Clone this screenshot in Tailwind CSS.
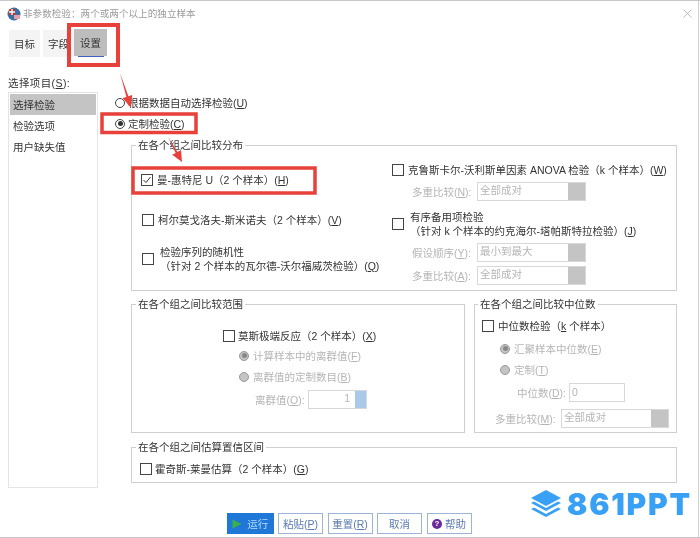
<!DOCTYPE html>
<html lang="en">
<head>
  <meta charset="UTF-8">
  <title>非参数检验</title>
  <script src="https://cdn.jsdelivr.net/npm/@tailwindcss/browser@4"></script>
</head>
<body class="bg-white">
<div class="relative w-[700px] h-[538px] overflow-hidden bg-white border-t border-t-[#c8c8c8] text-[10.5px] leading-[14px] text-[#333] blur-[0.3px] font-['Liberation_Sans','Noto_Sans_CJK_SC',sans-serif]">

  <!-- title bar -->
  <div class="flex items-center h-[25px] pl-[7px] pr-[8px]">
    <svg width="14" height="14" viewBox="0 0 14 14">
      <circle cx="7" cy="7" r="6.5" fill="#3b6ea5"/>
      <rect x="2" y="2" width="6" height="6" fill="#c0392b"/>
      <path d="M2 5h6M5 2v6" stroke="#fff" stroke-width="1.4"/>
      <rect x="7" y="8" width="6" height="4" fill="#e8a0a8"/>
    </svg>
    <span class="ml-[2px] text-[9.6px] text-[#9a9a9a]">非参数检验：两个或两个以上的独立样本</span>
    <svg class="ml-auto" width="9" height="9" viewBox="0 0 9 9"><path d="M0.5 0.5l8 8M8.5 0.5l-8 8" stroke="#aaa" stroke-width="0.8"/></svg>
  </div>

  <!-- tabs -->
  <div class="flex h-[32px] pl-[9px]">
    <div class="flex items-center justify-center w-[31px] h-[27px] mt-[4px] bg-[#f4f4f4]">目标</div>
    <div class="flex items-center justify-center w-[31px] h-[27px] mt-[4px] ml-[3px] bg-[#f4f4f4]">字段</div>
    <div class="relative flex items-center justify-center w-[33px] h-[27px] mt-[3px] bg-[#bdbdbd]">
      设置
      <span class="absolute left-[4px] right-[3px] bottom-[-1px] h-[1.5px] bg-[#3f5fc0]"></span>
    </div>
  </div>

  <!-- body -->
  <div class="flex pl-[8px] pr-[23px] mt-[18px]">
    <div class="w-[90px] shrink-0">
      <div class="h-[16px] tracking-[0.4px]">选择项目(<u>S</u>):</div>
      <div class="h-[396px] border border-[#e4e4e4] p-px">
        <div class="flex items-center h-[21px] px-[3px] bg-[#c4c4c4]">选择检验</div>
        <div class="flex items-center h-[21px] px-[3px]">检验选项</div>
        <div class="flex items-center h-[21px] px-[3px]">用户缺失值</div>
      </div>
    </div>

    <div class="flex-1 ml-[15px] pt-[16px]">
      <label class="flex items-center gap-[3px] h-[21px] pl-[2px]">
        <span class="w-[10px] h-[10px] rounded-full border border-[#444] bg-white"></span>
        <span>根据数据自动选择检验(<u>U</u>)</span>
      </label>
      <label class="flex items-center gap-[3px] h-[21px] pl-[2px]">
        <span class="flex items-center justify-center w-[10px] h-[10px] rounded-full border border-[#444]"><span class="w-[5px] h-[5px] rounded-full bg-[#333]"></span></span>
        <span>定制检验(<u>C</u>)</span>
      </label>

      <!-- compare distributions -->
      <fieldset class="h-[153px] mt-[4px] ml-[18px] border border-[#cfcfcf]">
        <legend class="ml-[4px] px-[2px]">在各个组之间比较分布</legend>
        <div class="flex w-full">
          <div class="w-[250px] pl-[9px] shrink-0">
            <label class="flex items-center gap-[4px] h-[24px] mt-[16px]">
              <span class="w-[12px] h-[12px] border border-[#444] flex items-center justify-center"><svg width="10" height="10" viewBox="0 0 10 10"><path d="M1.5 5l2.5 2.5 4.5-5.5" fill="none" stroke="#333" stroke-width="1"/></svg></span>
              <span>曼-惠特尼 U（2 个样本）(<u>H</u>)</span>
            </label>
            <label class="flex items-center gap-[4px] h-[24px] mt-[16px] pl-[1px]">
              <span class="w-[12px] h-[12px] border border-[#444]"></span>
              <span>柯尔莫戈洛夫-斯米诺夫（2 个样本）(<u>V</u>)</span>
            </label>
            <label class="flex items-center gap-[6px] mt-[13px] pl-[1px]">
              <span class="w-[12px] h-[12px] border border-[#444]"></span>
              <span>检验序列的随机性<br>（针对 2 个样本的瓦尔德-沃尔福威茨检验）(<u>Q</u>)</span>
            </label>
          </div>
          <div class="pl-[10px]">
            <label class="flex items-center gap-[4px] h-[16px] mt-[10px]">
              <span class="w-[12px] h-[12px] border border-[#444]"></span>
              <span>克鲁斯卡尔-沃利斯单因素 ANOVA 检验（k 个样本）(<u>W</u>)</span>
            </label>
            <div class="flex items-center h-[19px] mt-[4px] pl-[20px] text-[#b5b5b5]">
              <span class="w-[65px]">多重比较(<u>N</u>):</span>
              <div class="flex w-[109px] h-[19px] border border-[#d8d8d8]"><span class="flex-1 pl-[2px]">全部成对</span><span class="w-[17px] bg-[#c4c4c4]"></span></div>
            </div>
            <label class="flex items-center gap-[6px] mt-[9px]">
              <span class="w-[12px] h-[12px] border border-[#444]"></span>
              <span>有序备用项检验<br>（针对 k 个样本的约克海尔-塔帕斯特拉检验）(<u>J</u>)</span>
            </label>
            <div class="flex items-center h-[19px] mt-[5px] pl-[20px] text-[#b5b5b5]">
              <span class="w-[65px]">假设顺序(<u>Y</u>):</span>
              <div class="flex w-[109px] h-[19px] border border-[#d8d8d8]"><span class="flex-1 pl-[2px]">最小到最大</span><span class="w-[17px] bg-[#c4c4c4]"></span></div>
            </div>
            <div class="flex items-center h-[19px] mt-[4px] pl-[20px] text-[#b5b5b5]">
              <span class="w-[65px]">多重比较(<u>A</u>):</span>
              <div class="flex w-[109px] h-[19px] border border-[#d8d8d8]"><span class="flex-1 pl-[2px]">全部成对</span><span class="w-[17px] bg-[#c4c4c4]"></span></div>
            </div>
          </div>
        </div>
      </fieldset>

      <!-- range / median -->
      <div class="flex gap-[9px] mt-[6px] ml-[18px]">
        <fieldset class="w-[334px] h-[136px] border border-[#cfcfcf]">
          <legend class="ml-[4px] px-[2px]">在各个组之间比较范围</legend>
          <div class="pl-[91px] pt-[17px]">
            <label class="flex items-center gap-[3px] h-[16px]">
              <span class="w-[12px] h-[12px] border border-[#444]"></span>
              <span>莫斯极端反应（2 个样本）(<u>X</u>)</span>
            </label>
            <div class="flex items-center gap-[4px] h-[21px] mt-[1px] pl-[16px] text-[#b5b5b5]">
              <span class="flex items-center justify-center w-[10px] h-[10px] rounded-full bg-[#c4c4c4] border border-[#999]"><span class="w-[5px] h-[5px] rounded-full bg-[#888]"></span></span>
              <span>计算样本中的离群值(<u>F</u>)</span>
            </div>
            <div class="flex items-center gap-[4px] h-[21px] pl-[16px] text-[#b5b5b5]">
              <span class="w-[10px] h-[10px] rounded-full bg-[#c4c4c4] border border-[#999]"></span>
              <span>离群值的定制数目(<u>B</u>)</span>
            </div>
            <div class="flex items-center h-[19px] mt-[3px] pl-[32px] text-[#b5b5b5]">
              <span class="w-[53px]">离群值(<u>O</u>):</span>
              <div class="flex w-[59px] h-[19px] border border-[#d8d8d8]"><span class="flex-1 text-right pr-[5px]">1</span><span class="w-[11px] bg-[#a9c8ea]"></span></div>
            </div>
          </div>
        </fieldset>
        <fieldset class="w-[203px] h-[136px] border border-[#cfcfcf]">
          <legend class="ml-[3px] px-[2px]">在各个组之间比较中位数</legend>
          <div class="pl-[7px] pt-[7px]">
            <label class="flex items-center gap-[4px] h-[16px]">
              <span class="w-[12px] h-[12px] border border-[#444]"></span>
              <span>中位数检验（<u>k</u> 个样本）</span>
            </label>
            <div class="flex items-center gap-[4px] h-[21px] mt-[4px] pl-[18px] text-[#b5b5b5]">
              <span class="flex items-center justify-center w-[10px] h-[10px] rounded-full bg-[#c4c4c4] border border-[#999]"><span class="w-[5px] h-[5px] rounded-full bg-[#888]"></span></span>
              <span>汇聚样本中位数(<u>E</u>)</span>
            </div>
            <div class="flex items-center gap-[4px] h-[21px] pl-[18px] text-[#b5b5b5]">
              <span class="w-[10px] h-[10px] rounded-full bg-[#c4c4c4] border border-[#999]"></span>
              <span>定制(<u>T</u>)</span>
            </div>
            <div class="flex items-center h-[19px] mt-[3px] pl-[35px] text-[#b5b5b5]">
              <span class="w-[52px]">中位数(<u>D</u>):</span>
              <div class="w-[56px] h-[19px] border border-[#d8d8d8] pl-[2px] leading-[17px]">0</div>
            </div>
            <div class="flex items-center h-[19px] mt-[7px] pl-[13px] text-[#b5b5b5]">
              <span class="w-[66px]">多重比较(<u>M</u>):</span>
              <div class="flex w-[108px] h-[19px] border border-[#d8d8d8]"><span class="flex-1 pl-[2px]">全部成对</span><span class="w-[17px] bg-[#c4c4c4]"></span></div>
            </div>
          </div>
        </fieldset>
      </div>

      <!-- confidence interval -->
      <fieldset class="h-[43px] mt-[7px] ml-[18px] border border-[#cfcfcf]">
        <legend class="ml-[4px] px-[2px]">在各个组之间估算置信区间</legend>
        <label class="flex items-center gap-[3px] h-[16px] pl-[8px] mt-[7px]">
          <span class="w-[12px] h-[12px] border border-[#444]"></span>
          <span>霍奇斯-莱曼估算（2 个样本）(<u>G</u>)</span>
        </label>
      </fieldset>
    </div>
  </div>

  <!-- footer buttons -->
  <div class="flex gap-[4.5px] mt-[25px] pl-[227px]">
    <button class="flex items-center justify-center gap-[5px] w-[46.5px] h-[21px] bg-[#1f78d8] text-[#b8dcff]">
      <svg width="10" height="10" viewBox="0 0 10 10"><path d="M0.5 0.5L9.5 5L0.5 9.5Z" fill="#3cb04a"/></svg>运行
    </button>
    <button class="w-[45px] h-[21px] border border-[#9db4d8] text-[#5a7ab0]">粘贴(<u>P</u>)</button>
    <button class="w-[45px] h-[21px] border border-[#9db4d8] text-[#5a7ab0]">重置(<u>R</u>)</button>
    <button class="w-[45px] h-[21px] border border-[#9db4d8] text-[#5a7ab0]">取消</button>
    <button class="flex items-center justify-center gap-[3px] w-[45px] h-[21px] border border-[#9db4d8] text-[#5a7ab0]">
      <span class="flex items-center justify-center w-[10px] h-[10px] rounded-full bg-[#6a2a9a] text-white text-[8px] font-bold">?</span>帮助
    </button>
  </div>

  <!-- window edge -->
  <div class="absolute top-0 bottom-0 right-[1px] w-px bg-[#d0d0d0]"></div>
  <div class="absolute left-0 right-0 bottom-0 h-px bg-[#c8c8c8]"></div>

  <!-- watermark -->
  <div class="absolute left-[530px] top-[488px] flex items-center gap-[5px] text-[#38a0f5]">
    <svg width="32" height="30" viewBox="0 0 32 30">
      <path d="M16 1L31 9L16 17L1 9Z" fill="#38a0f5"/>
      <path d="M1 14L4 12.5L16 19L28 12.5L31 14L16 22Z" fill="#38a0f5"/>
      <path d="M1 20L4 18.5L16 25L28 18.5L31 20L16 28Z" fill="#38a0f5"/>
    </svg>
    <span class="text-[30px] leading-[30px] font-black tracking-[1.8px] font-['Inter',sans-serif]">861PPT</span>
  </div>

  <!-- red annotations -->
  <svg class="absolute left-0 top-[-1px] pointer-events-none" width="700" height="538" viewBox="0 0 700 538">
    <g fill="none" stroke="#e8403a">
      <rect x="69" y="25" width="49" height="40" stroke-width="4"/>
      <rect x="102" y="114" width="94" height="18.5" stroke-width="3.5"/>
      <rect x="133" y="168" width="182" height="25" stroke-width="3.5"/>
    </g>
    <path d="M120 73L128.4 96.3L132.2 95.1L131 108L122.6 98.1L126.4 96.9Z" fill="#e8403a"/>
    <path d="M168 137L177.5 151.9L181 150L182 162L172.2 154.8L175.7 152.9Z" fill="#e8403a"/>
  </svg>
</div>
</body>
</html>
